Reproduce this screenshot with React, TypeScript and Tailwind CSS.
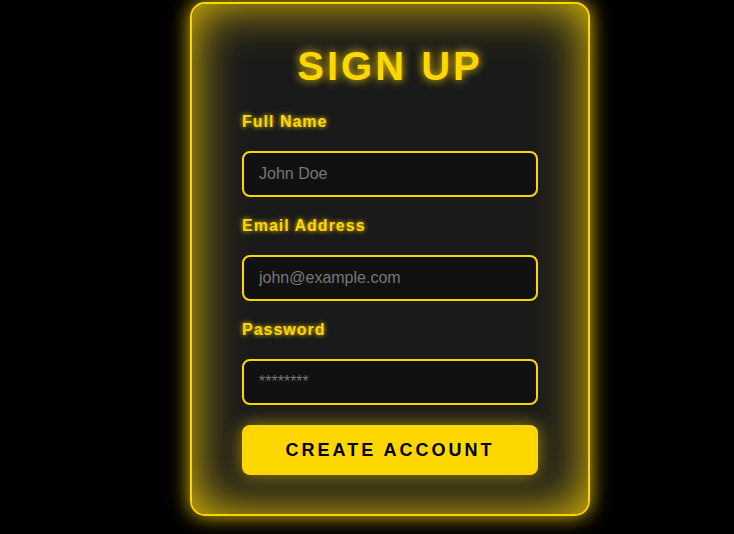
import React from 'react';

const fields = [
    { label: 'Full Name', placeholder: 'John Doe' },
    { label: 'Email Address', placeholder: 'john@example.com' },
    { label: 'Password', placeholder: '********' },
];

export default function App() {
    return (
        <div className="h-[534px] w-full overflow-hidden bg-black pl-[190px] pt-[2px] font-['Liberation_Sans',Arial,sans-serif]">
            <div className="w-[400px] rounded-[15px] border-2 border-[#ffd700] bg-[#1a1a1a] px-[50px] pt-[38px] pb-[39px] shadow-[0_0_20px_rgba(255,215,0,0.9),inset_0_0_50px_rgba(255,215,0,0.9)]">
                <h1 className="text-center text-[40px] leading-[48px] font-bold tracking-[3px] text-[#ffd700] [text-shadow:0_0_10px_#ffd700]">
                    SIGN UP
                </h1>

                <form className="mt-[23px] flex flex-col" onSubmit={(e) => e.preventDefault()}>
                    {fields.map((f, i) => (
                        <div key={f.label} className={i > 0 ? 'mt-[20px]' : ''}>
                            <label className="block text-[16px] leading-[18px] font-bold tracking-[1px] text-[#ffd700] [text-shadow:0_0_5px_#ffd700]">
                                {f.label}
                            </label>
                            <input
                                type="text"
                                placeholder={f.placeholder}
                                className="mt-[20px] block h-[46px] w-full rounded-[8px] border-2 border-[#ffd700] bg-[#111] px-[15px] text-[16px] text-white outline-none placeholder:text-[#777]"
                            />
                        </div>
                    ))}

                    <button
                        type="submit"
                        className="mt-[20px] h-[50px] w-full rounded-[8px] bg-[#ffd700] text-[18px] font-bold tracking-[3px] text-black shadow-[0_0_18px_rgba(255,215,0,0.6)]"
                    >
                        CREATE ACCOUNT
                    </button>
                </form>
            </div>
        </div>
    );
}
